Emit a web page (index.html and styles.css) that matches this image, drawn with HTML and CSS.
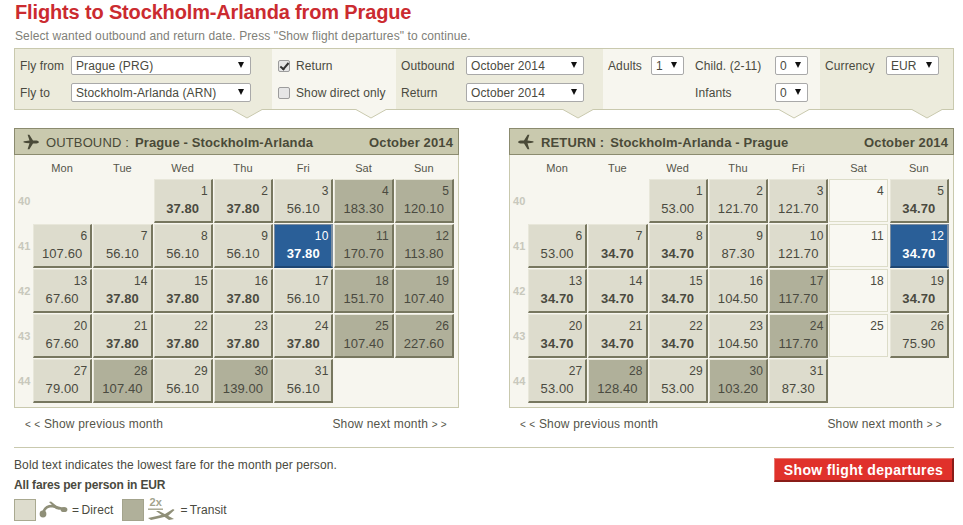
FILE: index.html
```html
<!DOCTYPE html>
<html lang="en">
<head>
    <meta charset="UTF-8">
    <title>Flights to Stockholm-Arlanda from Prague</title>
    <link rel="stylesheet" href="styles.css">
</head>
<body>
    <h1>Flights to Stockholm-Arlanda from Prague</h1>
    <p class="intro">Select wanted outbound and return date. Press "Show flight departures" to continue.</p>

    <!-- Search filters -->
    <form class="filters">
        <div class="group group-route">
            <div class="row"><label class="lbl-route">Fly from</label><div class="select w-route"><select><option>Prague (PRG)</option></select></div></div>
            <div class="row"><label class="lbl-route">Fly to</label><div class="select w-route"><select><option>Stockholm-Arlanda (ARN)</option></select></div></div>
            <svg class="notch" width="32" height="10"><polygon points="0,0 16,9 32,0" /><polyline points="0,0 16,9 32,0" /></svg>
        </div>
        <div class="group group-light group-opts">
            <div class="row"><label class="check"><input type="checkbox" checked>Return</label></div>
            <div class="row"><label class="check"><input type="checkbox">Show direct only</label></div>
            <svg class="notch" width="32" height="10"><polygon points="0,0 16,9 32,0" /><polyline points="0,0 16,9 32,0" /></svg>
        </div>
        <div class="group group-dates">
            <div class="row"><label class="lbl-date">Outbound</label><div class="select w-date"><select><option>October 2014</option></select></div></div>
            <div class="row"><label class="lbl-date">Return</label><div class="select w-date"><select><option>October 2014</option></select></div></div>
            <svg class="notch" width="32" height="10"><polygon points="0,0 16,9 32,0" /><polyline points="0,0 16,9 32,0" /></svg>
        </div>
        <div class="group group-light group-pax">
            <div class="row">
                <label class="lbl-adults">Adults</label><div class="select w-num"><select><option>1</option></select></div>
                <label class="lbl-child">Child. (2-11)</label><div class="select w-num"><select><option>0</option></select></div>
            </div>
            <div class="row row-end">
                <label class="lbl-child">Infants</label><div class="select w-num"><select><option>0</option></select></div>
            </div>
            <svg class="notch notch-wide" width="32" height="10"><polygon points="0,0 16,9 32,0" /><polyline points="0,0 16,9 32,0" /></svg>
        </div>
        <div class="group group-currency">
            <div class="row"><label class="lbl-cur">Currency</label><div class="select w-cur"><select><option>EUR</option></select></div></div>
            <svg class="notch notch-wide" width="32" height="10"><polygon points="0,0 16,9 32,0" /><polyline points="0,0 16,9 32,0" /></svg>
        </div>
    </form>

    <div class="calendars">
        <!-- Outbound -->
        <section class="calendar">
            <header class="cal-head">
                <svg class="plane" width="16" height="16" viewBox="0 0 16 16"><path d="M0 7.2 L1 7.2 L3 6.9 L6.5 6.6 L4.6 0.8 L6.4 0.8 L10 6.4 L13.5 6.4 C15 6.6 16 7.4 16 8 C16 8.6 15 9.2 13.5 9.4 L10 9.4 L6.4 15.2 L4.6 15.2 L6.5 9.2 L3 8.9 L1 8.6 L0 8.6 L1.2 7.9 Z"/></svg>
                <span class="cal-dir">OUTBOUND :</span>
                <b class="cal-route">Prague - Stockholm-Arlanda</b>
                <b class="cal-month">October 2014</b>
            </header>
            <div class="cal-body">
                <div class="days"><span></span><span>Mon</span><span>Tue</span><span>Wed</span><span>Thu</span><span>Fri</span><span>Sat</span><span>Sun</span></div>
                <div class="grid">
                    <span class="wk">40</span><span></span><span></span>
                    <a class="cell low"><i>1</i><b>37.80</b></a><a class="cell low"><i>2</i><b>37.80</b></a><a class="cell"><i>3</i><b>56.10</b></a><a class="cell transit"><i>4</i><b>183.30</b></a><a class="cell transit"><i>5</i><b>120.10</b></a>
                    <span class="wk">41</span>
                    <a class="cell"><i>6</i><b>107.60</b></a><a class="cell"><i>7</i><b>56.10</b></a><a class="cell"><i>8</i><b>56.10</b></a><a class="cell"><i>9</i><b>56.10</b></a><a class="cell low sel"><i>10</i><b>37.80</b></a><a class="cell transit"><i>11</i><b>170.70</b></a><a class="cell transit"><i>12</i><b>113.80</b></a>
                    <span class="wk">42</span>
                    <a class="cell"><i>13</i><b>67.60</b></a><a class="cell low"><i>14</i><b>37.80</b></a><a class="cell low"><i>15</i><b>37.80</b></a><a class="cell low"><i>16</i><b>37.80</b></a><a class="cell"><i>17</i><b>56.10</b></a><a class="cell transit"><i>18</i><b>151.70</b></a><a class="cell transit"><i>19</i><b>107.40</b></a>
                    <span class="wk">43</span>
                    <a class="cell"><i>20</i><b>67.60</b></a><a class="cell low"><i>21</i><b>37.80</b></a><a class="cell low"><i>22</i><b>37.80</b></a><a class="cell low"><i>23</i><b>37.80</b></a><a class="cell low"><i>24</i><b>37.80</b></a><a class="cell transit"><i>25</i><b>107.40</b></a><a class="cell transit"><i>26</i><b>227.60</b></a>
                    <span class="wk">44</span>
                    <a class="cell"><i>27</i><b>79.00</b></a><a class="cell transit"><i>28</i><b>107.40</b></a><a class="cell"><i>29</i><b>56.10</b></a><a class="cell transit"><i>30</i><b>139.00</b></a><a class="cell"><i>31</i><b>56.10</b></a>
                </div>
            </div>
            <div class="month-nav"><a><small>&lt; &lt;</small> Show previous month</a><a>Show next month <small>&gt; &gt;</small></a></div>
        </section>

        <!-- Return -->
        <section class="calendar">
            <header class="cal-head">
                <svg class="plane plane-back" width="16" height="16" viewBox="0 0 16 16"><path d="M0 7.2 L1 7.2 L3 6.9 L6.5 6.6 L4.6 0.8 L6.4 0.8 L10 6.4 L13.5 6.4 C15 6.6 16 7.4 16 8 C16 8.6 15 9.2 13.5 9.4 L10 9.4 L6.4 15.2 L4.6 15.2 L6.5 9.2 L3 8.9 L1 8.6 L0 8.6 L1.2 7.9 Z"/></svg>
                <b class="cal-dir">RETURN :</b>
                <b class="cal-route">Stockholm-Arlanda - Prague</b>
                <b class="cal-month">October 2014</b>
            </header>
            <div class="cal-body">
                <div class="days"><span></span><span>Mon</span><span>Tue</span><span>Wed</span><span>Thu</span><span>Fri</span><span>Sat</span><span>Sun</span></div>
                <div class="grid">
                    <span class="wk">40</span><span></span><span></span>
                    <a class="cell"><i>1</i><b>53.00</b></a><a class="cell"><i>2</i><b>121.70</b></a><a class="cell"><i>3</i><b>121.70</b></a><a class="cell none"><i>4</i></a><a class="cell low"><i>5</i><b>34.70</b></a>
                    <span class="wk">41</span>
                    <a class="cell"><i>6</i><b>53.00</b></a><a class="cell low"><i>7</i><b>34.70</b></a><a class="cell low"><i>8</i><b>34.70</b></a><a class="cell"><i>9</i><b>87.30</b></a><a class="cell"><i>10</i><b>121.70</b></a><a class="cell none"><i>11</i></a><a class="cell low sel"><i>12</i><b>34.70</b></a>
                    <span class="wk">42</span>
                    <a class="cell low"><i>13</i><b>34.70</b></a><a class="cell low"><i>14</i><b>34.70</b></a><a class="cell low"><i>15</i><b>34.70</b></a><a class="cell"><i>16</i><b>104.50</b></a><a class="cell transit"><i>17</i><b>117.70</b></a><a class="cell none"><i>18</i></a><a class="cell low"><i>19</i><b>34.70</b></a>
                    <span class="wk">43</span>
                    <a class="cell low"><i>20</i><b>34.70</b></a><a class="cell low"><i>21</i><b>34.70</b></a><a class="cell low"><i>22</i><b>34.70</b></a><a class="cell"><i>23</i><b>104.50</b></a><a class="cell transit"><i>24</i><b>117.70</b></a><a class="cell none"><i>25</i></a><a class="cell"><i>26</i><b>75.90</b></a>
                    <span class="wk">44</span>
                    <a class="cell"><i>27</i><b>53.00</b></a><a class="cell transit"><i>28</i><b>128.40</b></a><a class="cell"><i>29</i><b>53.00</b></a><a class="cell transit"><i>30</i><b>103.20</b></a><a class="cell"><i>31</i><b>87.30</b></a>
                </div>
            </div>
            <div class="month-nav"><a><small>&lt; &lt;</small> Show previous month</a><a>Show next month <small>&gt; &gt;</small></a></div>
        </section>
    </div>

    <footer class="foot">
        <div class="foot-info">
            <p class="note">Bold text indicates the lowest fare for the month per person.</p>
            <p class="note note-bold">All fares per person in EUR</p>
            <div class="legend">
                <span class="swatch"></span>
                <svg class="legend-icon" width="30" height="18" viewBox="0 0 30 18"><path d="M4 13 C5 7 9 5 13 5 L24 8" fill="none" stroke="#8f8f78" stroke-width="2.6"/><circle cx="4" cy="13" r="3.4" fill="#8f8f78"/><ellipse cx="25" cy="8.5" rx="3.4" ry="2.6" fill="#8f8f78"/><path d="M10 1 L12 0.5 L19 6 L21 9 L17 8 Z" fill="#8f8f78"/></svg>
                <span class="legend-text">= Direct</span>
                <span class="swatch swatch-transit"></span>
                <span class="transit-icon">
                    <span class="two-x">2x</span>
                    <svg width="27" height="14" viewBox="0 0 27 14"><path d="M0 2.2 H15" stroke="#a3a38c" stroke-width="1.4"/><path d="M0 11 L9 9 L17 7 L25 2 L26.5 3 L20 9 L12 11 L3 13 Z" fill="#8f8f78"/><path d="M8 4 L11 4 L26 12 L21 13 Z" fill="#8f8f78"/></svg>
                </span>
                <span class="legend-text">= Transit</span>
            </div>
        </div>
        <button class="submit" type="button">Show flight departures</button>
    </footer>
</body>
</html>
```

FILE: styles.css
```css
body {
    margin: 0;
    padding: 0 9px 0 14px;
    background-color: #fff;
    font-family: "Liberation Sans", Arial, sans-serif;
    font-size: 12px;
    letter-spacing: 0.1px;
    color: #4a4a40;
    height: 525px;
    overflow: hidden;
}
h1 {
    margin: 0;
    padding: 0 0 0 1px;
    font-size: 20px;
    letter-spacing: -0.15px;
    line-height: 24px;
    color: #cb2b30;
}
.intro {
    margin: 5px 0 0 1px;
    line-height: 14px;
    color: #808078;
}

/* Filter bar */
.filters {
    display: flex;
    height: 60px;
    margin-top: 5px;
    border: 1px solid #c9c9ae;
    background-color: #ecebdc;
}
.group {
    position: relative;
    padding-top: 7px;
    box-sizing: border-box;
}
.group-light { background-color: #f7f6ef; }
.group-route { width: 257px; padding-left: 5px; }
.group-opts { width: 124px; padding-left: 6px; }
.group-dates { width: 207px; padding-left: 5px; }
.group-pax { width: 217px; padding-left: 5px; }
.group-currency { width: 133px; padding-left: 5px; }
.row {
    display: flex;
    align-items: center;
    height: 19px;
    margin-bottom: 8px;
}
.row-end { padding-left: 76px; }
.lbl-route { width: 51px; }
.lbl-date { width: 65px; }
.lbl-adults { width: 43px; }
.lbl-child { width: 80px; margin-left: 11px; }
.lbl-cur { width: 61px; }
.check { display: flex; align-items: center; }
.check input {
    appearance: none;
    position: relative;
    width: 12px;
    height: 12px;
    margin: 0 6px 0 0;
    border: 1px solid #9c9c9c;
    border-radius: 2px;
    background-color: #e6e6e6;
}
.check input:checked::after {
    content: "";
    position: absolute;
    left: 3px;
    top: 0;
    width: 3px;
    height: 7px;
    border: solid #333;
    border-width: 0 2px 2px 0;
    transform: rotate(40deg);
}
.select {
    position: relative;
    height: 19px;
}
.select select {
    appearance: none;
    width: 100%;
    height: 19px;
    box-sizing: border-box;
    border: 1px solid #a9a9a9;
    border-radius: 2px;
    background-color: #fff;
    padding: 0 0 0 4px;
    font-family: inherit;
    font-size: 12px;
    letter-spacing: 0.1px;
    color: #4a4a40;
}
.select::after {
    content: "";
    position: absolute;
    right: 7px;
    top: 6px;
    border-left: 3.5px solid transparent;
    border-right: 3.5px solid transparent;
    border-top: 6px solid #111;
}
.w-route { width: 180px; }
.w-date { width: 118px; }
.w-num { width: 33px; }
.w-cur { width: 53px; }
.notch {
    position: absolute;
    right: 9px;
    bottom: -10px;
}
.notch-wide { right: 10px; }
.notch polygon { fill: #ecebdc; }
.notch polyline { fill: none; stroke: #c9c9ae; }
.group-light .notch polygon { fill: #f7f6ef; }

/* Calendars */
.calendars {
    display: flex;
    justify-content: space-between;
    margin-top: 18px;
}
.calendar { width: 445px; }
.cal-head {
    display: flex;
    align-items: center;
    height: 27px;
    box-sizing: border-box;
    padding: 1px 5px 0 8px;
    border: 1px solid #8b8b6f;
    background-color: #c9c9ae;
    font-size: 13px;
    letter-spacing: 0.13px;
    color: #4a4a38;
}
.plane { fill: #4a4a38; margin-right: 7px; }
.plane-back { transform: scaleX(-1); }
.cal-dir { margin-right: 6px; }
.cal-route { flex: 1; }
.cal-body {
    height: 253px;
    box-sizing: border-box;
    border: 1px solid #c9c9ae;
    border-top: 0;
    background-color: #f7f6ef;
    padding-right: 3px;
}
.days, .grid {
    display: grid;
    grid-template-columns: 18px repeat(7, 1fr);
}
.days {
    height: 24px;
    font-size: 11px;
    line-height: 26px;
    text-align: center;
    color: #55554a;
}
.days span { padding-right: 2px; }
.grid { grid-auto-rows: 45px; }
.wk {
    align-self: center;
    padding: 0 0 2px 3px;
    font-size: 11px;
    font-weight: bold;
    color: #c8c8bc;
}
.cell {
    display: block;
    margin: 0 1px 1px 0;
    border-style: solid;
    border-width: 1px 2px 2px 1px;
    border-color: #e8e7da #77775f #77775f #e8e7da;
    background-color: #dddccd;
    color: #4a4a40;
}
.cell i {
    display: block;
    height: 15px;
    padding: 4px 3px 0 0;
    font-style: normal;
    line-height: 15px;
    text-align: right;
}
.cell b {
    display: block;
    margin-top: 1px;
    font-size: 13px;
    font-weight: normal;
    line-height: 18px;
    text-align: center;
}
.low b { font-weight: bold; }
.transit { background-color: #b0b09a; }
.none {
    border-width: 1px;
    margin: 0 2px 2px 0;
    border-color: #dcdcc8;
    background-color: #f9f8f2;
}
.sel {
    border-color: #7d8ea0 #7d8ea0 #1e4672 #7d8ea0;
    background-color: #2a5f98;
    color: #fff;
}
.month-nav {
    display: flex;
    justify-content: space-between;
    padding: 9px 12px 0 11px;
    line-height: 14px;
    letter-spacing: 0.2px;
    color: #55554a;
}
.month-nav small { font-size: 10px; letter-spacing: 0.3px; }

/* Footer */
.foot {
    display: flex;
    justify-content: space-between;
    align-items: flex-start;
    margin-top: 15px;
    border-top: 1px solid #c9c9ae;
}
.note {
    margin: 10px 0 0;
    line-height: 14px;
}
.note-bold { margin-top: 6px; font-weight: bold; letter-spacing: -0.15px; }
.legend {
    display: flex;
    align-items: center;
    margin-top: 6px;
}
.swatch {
    width: 20px;
    height: 20px;
    border: 1px solid #a9a990;
    background-color: #dddccd;
}
.swatch-transit { margin-left: 9px; background-color: #b0b09a; border-color: #a3a38c; }
.legend-icon { margin: 0 3px 0 3px; }
.legend-text { word-spacing: -1px; }
.transit-icon {
    display: flex;
    flex-direction: column;
    width: 27px;
    margin: 0 5px 0 4px;
}
.two-x {
    padding-left: 1px;
    font-size: 11px;
    font-weight: bold;
    line-height: 9px;
    color: #a3a38c;
}
.submit {
    width: 180px;
    height: 24px;
    margin-top: 10px;
    padding: 0;
    border-style: solid;
    border-width: 1px 2px 2px 1px;
    border-color: #e87a72 #8a1c18 #8a1c18 #e87a72;
    background-color: #e0312b;
    font-family: inherit;
    font-size: 14px;
    font-weight: bold;
    letter-spacing: 0.35px;
    color: #fff;
    cursor: pointer;
}
```
